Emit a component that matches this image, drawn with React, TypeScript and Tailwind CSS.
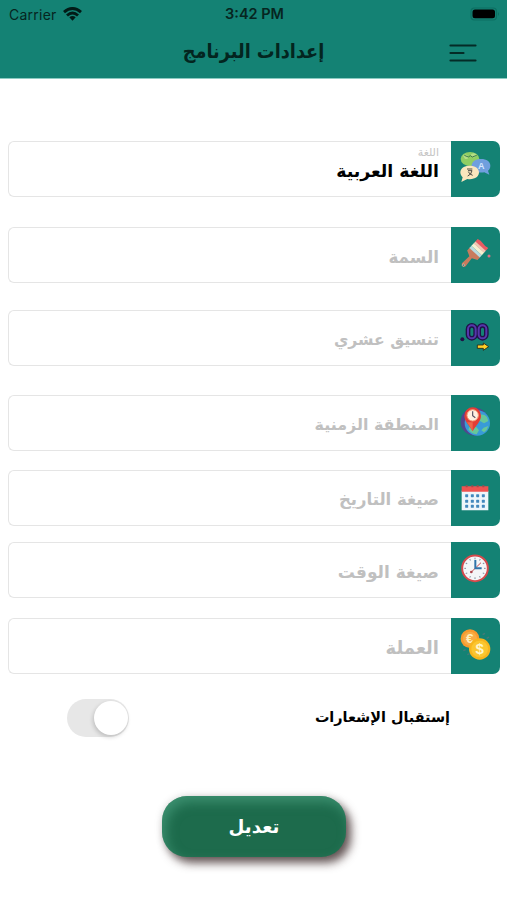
import type { ReactNode } from "react";
import { clsx } from "clsx";

const LanguageIcon = () => (
    <>
        <ellipse cx="57" cy="54" rx="28" ry="21" fill="#8fce63" />
        <path d="M36 44q10-8 15 2t-9 8zM58 42q8-10 18-2l-3 8q-8 4-15-6z" fill="#b5de86" />
        <path d="M40 43l12 5 6-4 6 4 13-5" fill="none" stroke="#3d7a4c" strokeWidth="3" />
        <path d="M90 54c17 0 28 8 28 20 0 7-3 12-7 15l4 12-15-7c-21 3-38-5-38-20 0-12 12-20 28-20z" fill="#6f9fde" />
        <text x="91" y="83" textAnchor="middle" fontSize="27" fontWeight="700" fill="#d6e8ff">A</text>
        <path d="M56 74c16 0 28 8 28 20 0 14-14 23-35 20l-18 9 4-14c-4-4-7-9-7-15 0-12 12-20 28-20z" fill="#fae6bd" />
        <path d="M48 84h16M51 89h12q-2 12-13 16M52 92q3 8 13 11" fill="none" stroke="#4d4b45" strokeWidth="3" />
    </>
);

const BrushIcon = () => (
    <>
        <g transform="translate(36 116) rotate(42)">
            <path d="M-7-3L-5-34-21-42v-12h42v12L5-34 7-3q-7 12-14 0z" fill="#c97b5d" />
            <path d="M-21-61h42v9h-42z" fill="#b9dbe0" />
            <path d="M-21-72h42v11h-42z" fill="#f5f0d0" />
            <path d="M-21-89q10-4 20-1t22 0v12h-42z" fill="#e85b62" />
            <path d="M-21-79h42v8h-42z" fill="#f3c5b4" />
            <circle cx="0" cy="-2" r="3.5" fill="#4a817a" stroke="#efd0bf" strokeWidth="1.5" />
        </g>
        <circle cx="114" cy="87" r="4.5" fill="#df7082" />
    </>
);

const DecimalIcon = () => (
    <>
        <circle cx="34" cy="88" r="6" fill="#211247" />
        <g fill="none" stroke="#1f1248" strokeWidth="14">
            <rect x="51" y="46" width="23" height="39" rx="11.5" />
            <rect x="83" y="46" width="23" height="39" rx="11.5" />
        </g>
        <g fill="none" stroke="#5636ab" strokeWidth="6">
            <rect x="51" y="46" width="23" height="39" rx="11.5" />
            <rect x="83" y="46" width="23" height="39" rx="11.5" />
        </g>
        <path d="M79 105h18v-6l16 11-16 11v-6H79z" fill="#ffd127" stroke="#292416" strokeWidth="2.5" strokeLinejoin="round" />
    </>
);

const TimezoneIcon = () => (
    <>
        <circle cx="71" cy="80" r="42" fill="#52458f" />
        <circle cx="79" cy="84" r="38" fill="#399bd8" />
        <path d="M84 60q14-4 24 6l4 12-13 7-12-7-8 7zM58 92l18 4 8 10-7 12q-18-2-25-15zM98 98l14-5q-3 13-13 19l-8-6z" fill="#67c79a" />
        <path d="M65 109C58 94 40 80 40 62a25 25 0 0150 0c0 18-18 32-25 47z" fill="#e33d35" />
        <path d="M65 109c-4-9-12-18-17-27h17z" fill="#ed674b" />
        <circle cx="65" cy="61" r="17" fill="#fff1e1" stroke="#f6a178" strokeWidth="3" />
        <path d="M65 49v13l8 6" fill="none" stroke="#555061" strokeWidth="3.5" />
    </>
);

const CalendarIcon = () => (
    <>
        <path d="M32 62h80v59H32z" fill="#eef6fb" />
        <path d="M32 49h80v16H32z" fill="#ef5350" />
        {[47, 64, 80, 97].map((x) => (
            <g key={x}>
                <path d={`M${x} 46v6`} stroke="#a5494c" strokeWidth="6" />
                {[77, 94, 109].map((y) => (
                    <rect key={y} x={x - 4.5} y={y - 4.5} width="9" height="9" rx="2" fill="#4288bd" />
                ))}
            </g>
        ))}
    </>
);

const ClockIcon = () => (
    <>
        <circle cx="72" cy="79" r="38.5" fill="#f4f6f8" stroke="#d44a4c" strokeWidth="6" />
        {[0, 30, 60, 90, 120, 150, 180, 210, 240, 270, 300, 330].map((angle) => (
            <path key={angle} d="M72 47v5" stroke="#7f8e9b" strokeWidth="3" transform={`rotate(${angle} 72 79)`} />
        ))}
        <path d="M60 91l30-29" stroke="#c64c52" strokeWidth="3" />
        <circle cx="61" cy="90" r="4" fill="#a9414b" />
        <path d="M73 54v25h19" fill="none" stroke="#2f73aa" strokeWidth="6" />
    </>
);

const CurrencyIcon = () => (
    <>
        <circle cx="57" cy="62" r="28" fill="#f79a2e" />
        <circle cx="57" cy="62" r="21" fill="#f7ac45" />
        <text x="56" y="76" textAnchor="middle" fontSize="40" fontWeight="700" fill="#fff0bd">€</text>
        <circle cx="86" cy="93" r="32" fill="#f7b51d" />
        <circle cx="86" cy="93" r="25" fill="#fbc630" />
        <text x="86" y="109" textAnchor="middle" fontSize="45" fontWeight="700" fill="#fff6c9">$</text>
        <path d="M95 50l7-4M107 61l7-4M37 98l7-3M49 110l7-3" stroke="#467b79" strokeWidth="4" />
    </>
);

type Field = {
    label: string;
    value?: string;
    icon: () => ReactNode;
    className: string;
    textClass: string;
};

const fields: Field[] = [
    { label: "اللغة", value: "اللغة العربية", icon: LanguageIcon, className: "mt-[62px]", textClass: "text-[17.3px]" },
    { label: "السمة", icon: BrushIcon, className: "mt-[30px]", textClass: "text-[16.8px]" },
    { label: "تنسيق عشري", icon: DecimalIcon, className: "mt-[27px]", textClass: "text-[15.7px]" },
    { label: "المنطقة الزمنية", icon: TimezoneIcon, className: "mt-[29px]", textClass: "text-[15.9px]" },
    { label: "صيغة التاريخ", icon: CalendarIcon, className: "mt-[19px]", textClass: "text-[16.5px]" },
    { label: "صيغة الوقت", icon: ClockIcon, className: "mt-4", textClass: "text-[17px]" },
    { label: "العملة", icon: CurrencyIcon, className: "mt-5", textClass: "text-[18px]" },
];

const StatusBar = () => (
    <div dir="ltr" className="grid h-7 grid-cols-3 items-center pl-[9px] pr-[7px] font-['Inter',sans-serif] text-[14px] text-[#06251f]">
        <div className="flex items-center gap-[6px]">
            <span className="tracking-[0.25px]">Carrier</span>
            <svg width="19" height="14" viewBox="0 0 19 14" fill="none" stroke="#021b17" strokeWidth="2.9">
                <path d="M1 5.2Q9.5-2.2 18 5.2M4 8.5Q9.5 3.500 15 8.500" />
                <path d="M6.3 10.3Q9.5 7.8 12.7 10.3L9.5 13.8z" fill="#021b17" stroke="none" />
            </svg>
        </div>
        <span className="text-center text-[14.5px] font-semibold">3:42 PM</span>
        <svg className="justify-self-end" width="30" height="14" viewBox="0 0 30 14">
            <rect x="1" y="1" width="25.5" height="12" rx="3.5" fill="none" stroke="#0d6f62" strokeWidth="1.2" />
            <rect x="2.500" y="2.500" width="22.500" height="8.800" rx="2.500" fill="#000" />
            <path d="M28 5q2 2 0 4z" fill="#0d6f62" />
        </svg>
    </div>
);

const Header = () => (
    <header className="h-[79px] border-b border-[#8ccbc2] bg-[#148274]">
        <StatusBar />
        <div className="grid h-[50px] grid-cols-[1fr_auto_1fr] items-center">
            <button aria-label="القائمة" className="ml-auto mr-[30px] justify-self-start">
                <svg width="28" height="20" viewBox="0 0 28 20" stroke="#042b26" strokeWidth="2.2" strokeLinecap="round">
                    <path d="M1.5 2.5h25M1.5 10h13M1.5 17.5h25" />
                </svg>
            </button>
            <h1 className="-mt-0.5 font-['DejaVu_Sans_Condensed','DejaVu_Sans',sans-serif] text-[19.7px] font-bold leading-none text-[#03251f]">
                إعدادات البرنامج
            </h1>
        </div>
    </header>
);

const SettingField = ({ label, value, icon: Icon, className, textClass }: Field) => (
    <div className={clsx("flex h-14 w-full", className)}>
        <div className="w-[49px] shrink-0 overflow-hidden rounded-r-[7px] bg-[#148274]">
            <svg width="49" height="55" viewBox="0 0 147 165" fontFamily="Liberation Sans, sans-serif">
                <Icon />
            </svg>
        </div>
        <div className="flex flex-1 flex-col rounded-l-[6px] border border-r-0 border-[#e5e5e5] pr-3">
            {value && <span className="mt-1 h-[13px] text-[11px] leading-[13px] text-[#c5c5c5]">{label}</span>}
            <span
                className={clsx(
                    "font-bold leading-6 whitespace-nowrap",
                    value ? "text-black" : "mt-[17px] text-[#c0c0c0]",
                    textClass
                )}
            >
                {value ?? label}
            </span>
        </div>
    </div>
);

export default function App() {
    return (
        <div dir="rtl" className="h-[900px] w-[507px] overflow-hidden bg-white font-['DejaVu_Sans',sans-serif]">
            <Header />
            <main className="pl-2 pr-[7px]">
                {fields.map((field) => (
                    <SettingField key={field.label} {...field} />
                ))}
                <div className="mt-6 flex h-[39px] items-center justify-between pl-[59px] pr-[50px]">
                    <span className="text-[14.4px] font-bold text-black">إستقبال الإشعارات</span>
                    <div className="flex h-[38px] w-[62px] items-center justify-start rounded-full bg-[#e7e7e7] pr-[1px]">
                        <div className="size-[34px] rounded-full bg-white shadow-[-1px_2px_4px_rgba(0,0,0,0.18)]" />
                    </div>
                </div>
                <button className="ml-auto mr-[154px] mt-[59px] flex h-[61px] w-[184px] items-center justify-center rounded-[25px] bg-[#1d6b4c] text-[18.3px] font-bold text-white shadow-[5px_6px_10px_rgba(45,25,25,0.72),0_0_8px_rgba(0,0,0,0.12),inset_4px_6px_12px_rgba(90,180,145,0.5)]">
                    تعديل
                </button>
            </main>
        </div>
    );
}
